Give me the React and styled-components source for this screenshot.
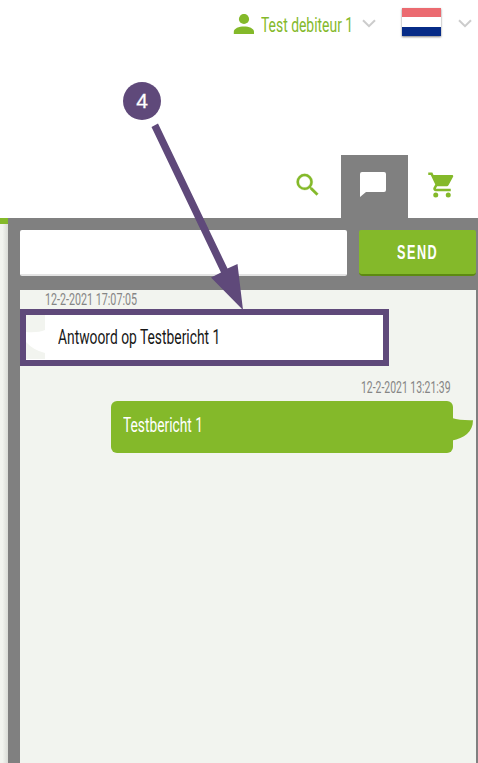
import React, { useLayoutEffect, useRef, useState } from "react";
import styled, { createGlobalStyle } from "styled-components";

const green = "#84b92a";
const grey = "#808080";
const pale = "#f2f4ef";
const purple = "#5f497a";

const GlobalStyle = createGlobalStyle`
  * { box-sizing: border-box; }
  body { margin: 0; background: #fff; font-family: Roboto, "Liberation Sans", sans-serif; overflow: hidden; }
  svg { display: block; flex: none; }
`;

const Page = styled.main`
  position: relative;
  width: 478px;
  height: 763px;
  display: flex;
  flex-direction: column;
  overflow: hidden;
`;

const LabelBox = styled.span`
  display: block;
  flex: none;
  width: ${(p) => p.$width}px;
  height: ${(p) => p.$size}px;
  line-height: ${(p) => p.$size}px;
  font-size: ${(p) => p.$size}px;
  font-weight: ${(p) => p.$weight || 400};
  letter-spacing: ${(p) => p.$spacing || 0}px;
  color: ${(p) => p.$color};
  white-space: nowrap;
`;

const LabelText = styled.span`
  display: inline-block;
  transform-origin: left center;
`;

function Label({ width, size, color, weight, spacing, children }) {
  const ref = useRef(null);
  const [scale, setScale] = useState(1);
  useLayoutEffect(() => {
    setScale(width / ref.current.offsetWidth);
  }, [width, children]);
  return (
    <LabelBox $width={width} $size={size} $color={color} $weight={weight} $spacing={spacing}>
      <LabelText ref={ref} style={{ transform: `scaleX(${scale})` }}>{children}</LabelText>
    </LabelBox>
  );
}

const AccountBar = styled.header`
  display: flex;
  height: 155px;
  padding: 8px 6px 0 233px;
  align-items: flex-start;
`;

const Account = styled.div`
  display: flex;
  align-items: flex-start;
  height: 30px;
  padding-top: 6px;
  gap: 7px;
`;

const AccountName = styled.div`
  padding-top: 1px;
`;

const Chevron = styled.svg`
  margin: ${(p) => p.$margin};
`;

const Flag = styled.div`
  width: 39px;
  height: 28px;
  margin-left: 26px;
  display: flex;
  flex-direction: column;
  box-shadow: 0 1px 2px rgba(0, 0, 0, 0.5);
`;

const Stripe = styled.span`
  flex: 1;
  background: ${(p) => p.$fill};
`;

const Tools = styled.nav`
  display: flex;
  height: 63px;
  padding-left: 273px;
`;

const Tool = styled.button`
  width: 67.5px;
  height: 63px;
  padding: 0 0 3px;
  border: 0;
  display: flex;
  align-items: center;
  justify-content: center;
  background: ${(p) => (p.$active ? grey : "transparent")};
  color: ${(p) => (p.$active ? "#fff" : green)};
`;

const Body = styled.section`
  flex: 1;
  display: flex;
  min-height: 0;
`;

const Backdrop = styled.div`
  width: 8px;
  border-top: 6px solid ${green};
  background: linear-gradient(90deg, ${pale} 30%, #d9dbd6);
`;

const Panel = styled.div`
  flex: 1;
  display: flex;
  flex-direction: column;
  padding: 12px 2.5px 0 12px;
  gap: 14px;
  background: ${grey};
`;

const Composer = styled.form`
  display: flex;
  height: 46px;
  gap: 12px;
`;

const Field = styled.input`
  width: 327px;
  padding: 0 10px;
  border: 0;
  border-bottom: 2px solid #e3e3e3;
  border-radius: 2px;
  background: #fff;
  outline: 0;
`;

const Send = styled.button`
  flex: 1;
  display: flex;
  align-items: center;
  border: 0;
  border-bottom: 2px solid #5d8a12;
  border-radius: 2px 2px 4px 4px;
  padding: 0 0 1px 38px;
  background: ${green};
`;

const Messages = styled.div`
  flex: 1;
  display: flex;
  flex-direction: column;
  background: ${pale};
`;

const Stamp = styled.div`
  display: flex;
  height: 20px;
  padding: ${(p) => (p.$own ? "2px 25.5px 0 0" : "1px 0 0 25px")};
  justify-content: ${(p) => (p.$own ? "flex-end" : "flex-start")};
`;

const Highlight = styled.div`
  display: flex;
  width: 369px;
  height: 56.5px;
  margin: -1px 0 11.5px;
  border: 6px solid ${purple};
  background: #fff;
`;

const Reply = styled.div`
  padding: 12px 0 0 13px;
`;

const OwnRow = styled.div`
  display: flex;
  margin: 4px 0 0 91px;
`;

const OwnBubble = styled.div`
  width: 342px;
  height: 52px;
  padding: 14px 12px;
  border-radius: 6px;
  background: ${green};
`;

const Tail = styled.svg`
  margin: 17px 0 0 -1px;
`;

const Pointer = styled.svg`
  position: absolute;
  left: 145px;
  top: 120px;
  pointer-events: none;
`;

const Step = styled.div`
  position: absolute;
  left: 123px;
  top: 82px;
  width: 38px;
  height: 38px;
  border-radius: 50%;
  background: ${purple};
  color: #fff;
  font: 21px/38px "Liberation Sans", sans-serif;
  -webkit-text-stroke: 0.3px #fff;
  text-align: center;
`;

function Down({ margin }) {
  return (
    <Chevron $margin={margin} width="14" height="9" viewBox="0 0 14 9" fill="none">
      <path d="M1 1.2 7 7.2 13 1.2" stroke="#ccc" strokeWidth="2" />
    </Chevron>
  );
}

export default function App() {
  return (
    <Page>
      <GlobalStyle />
      <AccountBar>
        <Account>
          <svg width="21" height="20" viewBox="0 0 21 20" fill={green}>
            <circle cx="11" cy="5" r="5.1" />
            <path d="M.8 20v-2.2C.8 14.4 6 12.5 11 12.5s10 1.9 10 5.3V20z" />
          </svg>
          <AccountName>
            <Label width={92} size={21} color={green}>Test debiteur 1</Label>
          </AccountName>
        </Account>
        <Down margin="11px 0 0 9px" />
        <Flag>
          <Stripe $fill="#eb6a70" />
          <Stripe $fill="#fff" />
          <Stripe $fill="#062b87" />
        </Flag>
        <Down margin="11px 0 0 17px" />
      </AccountBar>
      <Tools>
        <Tool aria-label="Search">
          <svg width="30" height="30" viewBox="-.6 0 24 24" fill="currentColor" stroke="currentColor" strokeWidth=".2">
            <path d="M15.5 14h-.79l-.28-.27A6.47 6.47 0 0 0 16 9.5 6.5 6.5 0 1 0 9.5 16c1.61 0 3.09-.59 4.23-1.57l.27.28v.79l5 4.99L20.49 19l-4.99-5zm-6 0C7.01 14 5 11.99 5 9.5S7.01 5 9.5 5 14 7.01 14 9.5 11.99 14 9.5 14z" />
          </svg>
        </Tool>
        <Tool $active aria-label="Messages">
          <svg width="28" height="26" viewBox="0 0 28 26" fill="currentColor">
            <path d="M2 0h22q2 0 2 2v16q0 2-2 2H6l-6 5v-23q0-2 2-2z" />
          </svg>
        </Tool>
        <Tool aria-label="Cart">
          <svg width="30" height="30" viewBox="0 0 24 24" fill="currentColor">
            <path d="M7 18a2 2 0 1 0 0 4 2 2 0 0 0 0-4zM17 18a2 2 0 1 0 0 4 2 2 0 0 0 0-4z" />
            <path d="M1 2v2h2l3.600 7.590-1.350 2.450c-.16.28-.25.61-.25.96 0 1.100.9 2 2 2h12v-2H7.420c-.14 0-.25-.11-.25-.25l.03-.12.9-1.630h7.450c.75 0 1.410-.41 1.750-1.030l3.580-6.490c.08-.14.12-.31.12-.48 0-.55-.45-1-1-1H5.210l-.94-2H1z" />
          </svg>
        </Tool>
      </Tools>
      <Body>
        <Backdrop />
        <Panel>
          <Composer>
            <Field aria-label="Message" />
            <Send type="button">
              <Label width={41} size={21} color="#fff" weight={700} spacing={2.5}>SEND</Label>
            </Send>
          </Composer>
          <Messages>
            <Stamp>
              <Label width={92} size={17} color="#858585">12-2-2021 17:07:05</Label>
            </Stamp>
            <Highlight>
              <svg width="19" height="44" viewBox="0 0 19 44">
                <path fill={pale} d="M0 0h19v15Q12 18 0 17z" />
                <path fill={pale} d="M0 27Q7 35 19 38v6.500H0z" />
              </svg>
              <Reply>
                <Label width={162} size={21} color="#171717">Antwoord op Testbericht 1</Label>
              </Reply>
            </Highlight>
            <Stamp $own>
              <Label width={89.5} size={17} color="#858585">12-2-2021 13:21:39</Label>
            </Stamp>
            <OwnRow>
              <OwnBubble>
                <Label width={80} size={21} color="#fff">Testbericht 1</Label>
              </OwnBubble>
              <Tail width="22" height="23" viewBox="0 0 22 23">
                <path d="M0 0Q8 2.5 21 2.2C21 14 12 20 0 22.5z" fill={green} />
              </Tail>
            </OwnRow>
          </Messages>
        </Panel>
      </Body>
      <Pointer width="100" height="192" viewBox="0 0 100 192" fill={purple}>
        <path d="M6.500 7 13 3.500 82.500 148.500 92.500 144 98 190 66 157.500 76 152.500z" />
      </Pointer>
      <Step>4</Step>
    </Page>
  );
}
